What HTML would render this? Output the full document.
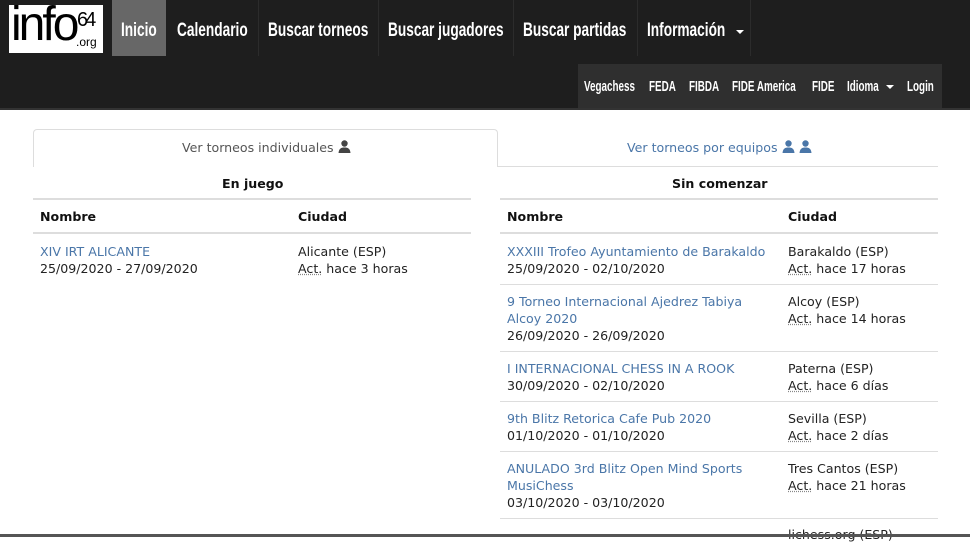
<!DOCTYPE html>
<html><head><meta charset="utf-8"><style>
*{margin:0;padding:0;box-sizing:border-box}
body{width:970px;height:537px;overflow:hidden;background:#fff;font-family:"DejaVu Sans",Verdana,sans-serif;font-size:12.6px;color:#222;position:relative}
.hdr{position:absolute;left:0;top:0;width:970px;height:110px;background:#1e1e1e;border-bottom:2px solid #333}
.logo{position:absolute;left:9px;top:5px;width:94px;height:48px;background:#fff;color:#000;font-family:"Liberation Sans",sans-serif;overflow:hidden}
.nv{position:absolute;top:0;height:56px;line-height:62px;color:#fff;font-family:"Liberation Sans",sans-serif;font-weight:bold;font-size:19px}
.nv span{display:inline-block;transform:scaleX(.72);transform-origin:left center;white-space:nowrap}
.sep{position:absolute;top:0;width:1px;height:56px;background:#2c2c2c}
.sub{position:absolute;left:578px;top:64px;width:364px;height:44px;background:#2f2f2f}
.sv{position:absolute;top:0;line-height:46px;color:#fff;font-family:"Liberation Sans",sans-serif;font-weight:bold;font-size:14.5px}
.sv span{display:inline-block;transform:scaleX(.68);transform-origin:left center;white-space:nowrap}
.car{display:inline-block;width:0;height:0;border-left:4px solid transparent;border-right:4px solid transparent;border-top:4px solid #fff;vertical-align:middle;margin-left:4px}
.t{position:absolute;white-space:nowrap}
.a{color:#4a76a8}
.b{font-weight:bold;color:#111}
.ln{position:absolute;height:1px;background:#ddd}
.ln2{position:absolute;height:2px;background:#ddd}
abbr{text-decoration:underline dotted #888}
svg.u{vertical-align:-1px}
</style></head><body>
<div class="hdr">
 <div class="logo"><span style="position:absolute;left:2px;top:-8px;font-size:48px;letter-spacing:-3px">info</span><span style="position:absolute;left:68px;top:4px;font-size:20px;letter-spacing:-3px">64</span><span style="position:absolute;left:67px;top:30px;font-size:12px">.org</span></div>
 <div style="position:absolute;left:112px;top:0;width:54px;height:56px;background:#676767"></div>
 <div class="nv" style="left:121px"><span>Inicio</span></div>
 <div class="nv" style="left:177px"><span>Calendario</span></div>
 <div class="sep" style="left:258px"></div>
 <div class="nv" style="left:268px"><span>Buscar torneos</span></div>
 <div class="sep" style="left:378px"></div>
 <div class="nv" style="left:388px"><span>Buscar jugadores</span></div>
 <div class="sep" style="left:513px"></div>
 <div class="nv" style="left:523px"><span>Buscar partidas</span></div>
 <div class="sep" style="left:637px"></div>
 <div class="nv" style="left:647px"><span>Información</span></div>
 <div style="position:absolute;left:732px;top:30px" class="car"></div>
 <div class="sep" style="left:750px"></div>
 <div class="sub">
  <div class="sv" style="left:6px"><span>Vegachess</span></div>
  <div class="sv" style="left:71px"><span>FEDA</span></div>
  <div class="sv" style="left:111px"><span>FIBDA</span></div>
  <div class="sv" style="left:154px"><span>FIDE America</span></div>
  <div class="sv" style="left:234px"><span>FIDE</span></div>
  <div class="sv" style="left:269px"><span>Idioma</span></div>
  <div style="position:absolute;left:304px;top:21px" class="car"></div>
  <div class="sv" style="left:329px"><span>Login</span></div>
 </div>
</div>

<div style="position:absolute;left:33px;top:129px;width:465px;height:38px;border:1px solid #ddd;border-bottom:none;border-radius:4px 4px 0 0;background:#fff"></div>
<div class="ln" style="left:497px;top:166px;width:441px"></div>
<div class="t" style="left:182px;top:140px;color:#555">Ver torneos individuales <svg class="u" width="13" height="13" viewBox="0 0 13 13"><circle cx="6.5" cy="3.5" r="3.2" fill="#444"/><path d="M0.5 13 C1 8.5 3 7.5 6.5 7.5 C10 7.5 12 8.5 12.5 13Z" fill="#444"/></svg></div>
<div class="t a" style="left:627px;top:140px">Ver torneos por equipos <svg class="u" width="13" height="13" viewBox="0 0 13 13"><circle cx="6.5" cy="3.5" r="3.2" fill="#4a76a8"/><path d="M0.5 13 C1 8.5 3 7.5 6.5 7.5 C10 7.5 12 8.5 12.5 13Z" fill="#4a76a8"/></svg> <svg class="u" width="13" height="13" viewBox="0 0 13 13"><circle cx="6.5" cy="3.5" r="3.2" fill="#4a76a8"/><path d="M0.5 13 C1 8.5 3 7.5 6.5 7.5 C10 7.5 12 8.5 12.5 13Z" fill="#4a76a8"/></svg></div>

<div class="t b" style="left:222px;top:176px">En juego</div>
<div class="ln2" style="left:33px;top:198px;width:438px"></div>
<div class="t b" style="left:40px;top:209px">Nombre</div>
<div class="t b" style="left:298px;top:209px">Ciudad</div>
<div class="ln2" style="left:33px;top:232px;width:438px"></div>
<div class="t" style="left:40px;top:243px;line-height:17px"><span class="a">XIV IRT ALICANTE</span><br>25/09/2020 - 27/09/2020</div>
<div class="t" style="left:298px;top:243px;line-height:17px">Alicante (ESP)<br><abbr>Act.</abbr> hace 3 horas</div>

<div class="t b" style="left:672px;top:176px">Sin comenzar</div>
<div class="ln2" style="left:500px;top:198px;width:438px"></div>
<div class="t b" style="left:507px;top:209px">Nombre</div>
<div class="t b" style="left:788px;top:209px">Ciudad</div>
<div class="ln2" style="left:500px;top:232px;width:438px"></div>

<div class="t" style="left:507px;top:243px;line-height:17px"><span class="a">XXXIII Trofeo Ayuntamiento de Barakaldo</span><br>25/09/2020 - 02/10/2020</div>
<div class="t" style="left:788px;top:243px;line-height:17px">Barakaldo (ESP)<br><abbr>Act.</abbr> hace 17 horas</div>
<div class="ln" style="left:500px;top:284px;width:438px"></div>

<div class="t" style="left:507px;top:293px;line-height:17px"><span class="a">9 Torneo Internacional Ajedrez Tabiya<br>Alcoy 2020</span><br>26/09/2020 - 26/09/2020</div>
<div class="t" style="left:788px;top:293px;line-height:17px">Alcoy (ESP)<br><abbr>Act.</abbr> hace 14 horas</div>
<div class="ln" style="left:500px;top:351px;width:438px"></div>

<div class="t" style="left:507px;top:360px;line-height:17px"><span class="a">I INTERNACIONAL CHESS IN A ROOK</span><br>30/09/2020 - 02/10/2020</div>
<div class="t" style="left:788px;top:360px;line-height:17px">Paterna (ESP)<br><abbr>Act.</abbr> hace 6 días</div>
<div class="ln" style="left:500px;top:401px;width:438px"></div>

<div class="t" style="left:507px;top:410px;line-height:17px"><span class="a">9th Blitz Retorica Cafe Pub 2020</span><br>01/10/2020 - 01/10/2020</div>
<div class="t" style="left:788px;top:410px;line-height:17px">Sevilla (ESP)<br><abbr>Act.</abbr> hace 2 días</div>
<div class="ln" style="left:500px;top:451px;width:438px"></div>

<div class="t" style="left:507px;top:460px;line-height:17px"><span class="a">ANULADO 3rd Blitz Open Mind Sports<br>MusiChess</span><br>03/10/2020 - 03/10/2020</div>
<div class="t" style="left:788px;top:460px;line-height:17px">Tres Cantos (ESP)<br><abbr>Act.</abbr> hace 21 horas</div>
<div class="ln" style="left:500px;top:518px;width:438px"></div>
<div class="t" style="left:788px;top:527px">lichess.org (ESP)</div>
<div style="position:absolute;left:0;top:534px;width:970px;height:3px;background:#555"></div>
</body></html>
